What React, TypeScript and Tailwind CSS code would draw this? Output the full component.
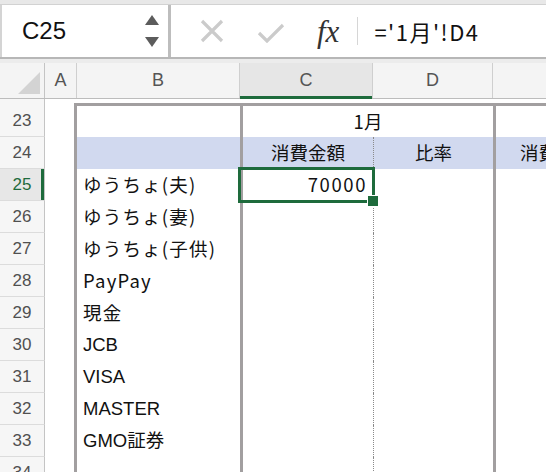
import React from "react";

const GREEN = "#1e6b3c";
const jp = { fontFamily: '"Noto Sans CJK JP", "Noto Sans", sans-serif' };
const lat = { fontFamily: '"Liberation Sans", "Noto Sans CJK JP", sans-serif' };

const LABELS: { text: string; latin?: boolean }[] = [
  { text: "ゆうちょ(夫)" },
  { text: "ゆうちょ(妻)" },
  { text: "ゆうちょ(子供)" },
  { text: "PayPay" },
  { text: "現金" },
  { text: "JCB", latin: true },
  { text: "VISA", latin: true },
  { text: "MASTER", latin: true },
  { text: "GMO証券", latin: true },
  { text: "" },
];

function RowNum({ n, active, top }: { n: number; active?: boolean; top?: boolean }) {
  return (
    <div
      className={`relative w-[45px] shrink-0 flex items-center justify-center border-r border-b border-r-[#c4c4c4] border-b-[#dcdcdc] text-[17px] ${
        active ? "bg-[#e7e7e7] text-[#1e6b3c]" : "bg-[#f6f6f6] text-[#505050]"
      } ${top ? "pt-[7px]" : ""}`}
      style={lat}
    >
      {n}
      {active && <div className="absolute right-0 top-0 bottom-0 w-[3px] bg-[#1e6b3c]" />}
    </div>
  );
}

function FormulaBar() {
  return (
    <>
      <div className="h-[5px] bg-[#e8e8e8] border-b border-[#d2d2d2]" />
      <div className="flex h-[52px] bg-white">
        <div className="w-[168px] shrink-0 flex items-center justify-between pl-[20px] pr-[8px] border-l-2 border-[#d4d4d4]">
          <span className="text-[24px] text-[#111]" style={lat}>
            C25
          </span>
          <svg width="16" height="34" viewBox="0 0 16 34">
            <polygon points="8,1 15,11 1,11" fill="#5c5c5c" />
            <polygon points="1,23 15,23 8,33" fill="#5c5c5c" />
          </svg>
        </div>
        <div className="w-[3px] bg-[#bdbdbd]" />
        <div className="flex items-center">
          <svg width="24" height="24" viewBox="0 0 24 24" className="ml-[29px]">
            <path d="M2 2 L22 22 M22 2 L2 22" stroke="#cbcbcb" strokeWidth="3.2" />
          </svg>
          <svg width="28" height="20" viewBox="0 0 28 20" className="ml-[33px] mt-[4px]">
            <path d="M2 10 L10 18 L26 2" stroke="#cbcbcb" strokeWidth="3.2" fill="none" />
          </svg>
          <span
            className="ml-[32px] text-[31px] italic text-[#333] leading-none"
            style={{ fontFamily: '"Liberation Serif", "DejaVu Serif", serif' }}
          >
            fx
          </span>
          <div className="ml-[18px] w-px h-[28px] bg-[#d6d6d6]" />
          <span className="ml-[16px] text-[22px] tracking-[1.5px] text-[#111]" style={jp}>
            ='1月'!D4
          </span>
        </div>
      </div>
      <div className="h-[2px] bg-[#b7b7b7]" />
      <div className="h-[4px] bg-[#ececec]" />
    </>
  );
}

function HeaderRow() {
  const cell = "shrink-0 flex items-center justify-center border-r border-[#cfcfcf] text-[18px] text-[#555]";
  return (
    <div className="flex h-[36px] bg-[#f4f4f4] border-b border-[#bcbcbc]" style={lat}>
      <div className="relative w-[45px] shrink-0 border-r border-[#c4c4c4]">
        <svg width="22" height="22" viewBox="0 0 22 22" className="absolute right-[4px] bottom-[4px]">
          <polygon points="22,0 22,22 0,22" fill="#d3d3d3" />
        </svg>
      </div>
      <div className={`${cell} w-[32px]`}>A</div>
      <div className={`${cell} w-[163px]`}>B</div>
      <div className={`${cell} w-[133px] relative bg-[#e6e6e6] text-[#1e6b3c]`}>
        C
        <div className="absolute left-0 right-0 bottom-[-1px] h-[3px] bg-[#1e6b3c]" />
      </div>
      <div className={`${cell} w-[120px]`}>D</div>
      <div className="flex-1" />
    </div>
  );
}

export default function App() {
  const border = "border-[#a29fa0]";
  return (
    <div className="w-[546px] h-[472px] overflow-hidden bg-white relative">
      <FormulaBar />
      <HeaderRow />
      <div className="relative">
        {/* row 23 */}
        <div className="flex h-[38px]">
          <RowNum n={23} top />
          <div className="w-[29px] shrink-0" />
          <div className="flex-1 flex pt-[4px]">
            <div className={`flex-1 flex border-t-[3px] ${border}`}>
              <div className={`w-[166px] shrink-0 border-l-[3px] ${border}`} />
              <div
                className={`w-[253px] shrink-0 border-l-[3px] ${border} flex items-center justify-center text-[18.5px] text-[#111]`}
                style={jp}
              >
                1月
              </div>
              <div className={`flex-1 border-l-[3px] ${border}`} />
            </div>
          </div>
        </div>
        {/* row 24 */}
        <div className="flex h-[32px]">
          <RowNum n={24} />
          <div className="w-[29px] shrink-0" />
          <div className="flex-1 flex bg-[#d1d9ef] text-[18.5px] text-[#111]" style={jp}>
            <div className={`w-[166px] shrink-0 border-l-[3px] ${border} bg-white`}>
              <div className="h-full bg-[#d1d9ef]" />
            </div>
            <div className={`w-[133px] shrink-0 border-l-[3px] ${border} flex items-center justify-center`}>
              消費金額
            </div>
            <div className="w-[120px] shrink-0 border-l border-dotted border-[#8a8a8a] flex items-center justify-center">
              比率
            </div>
            <div className={`flex-1 border-l-[3px] ${border} flex items-center pl-[24px] whitespace-nowrap overflow-hidden`}>
              消費金額
            </div>
          </div>
        </div>
        {LABELS.map((l, i) => {
          const n = 25 + i;
          return (
            <div key={n} className="flex h-[32px]">
              <RowNum n={n} active={n === 25} />
              <div className="w-[29px] shrink-0" />
              <div className="flex-1 flex text-[18.5px] text-[#111]">
                <div
                  className={`w-[166px] shrink-0 border-l-[3px] ${border} flex items-center pl-[6px] whitespace-nowrap ${
                    l.latin ? "" : "tracking-[1.2px]"
                  }`}
                  style={l.latin ? lat : jp}
                >
                  {l.text}
                </div>
                <div
                  className={`w-[133px] shrink-0 border-l-[3px] ${border} flex items-center justify-end pr-[6px] tracking-[1.6px]`}
                  style={jp}
                >
                  {n === 25 ? "70000" : ""}
                </div>
                <div className="w-[120px] shrink-0 border-l border-dotted border-[#8a8a8a]" />
                <div className={`flex-1 border-l-[3px] ${border}`} />
              </div>
            </div>
          );
        })}
        {/* selection of C25 */}
        <div
          className="absolute left-[238px] top-[68px] w-[137px] h-[36px] border-[3px]"
          style={{ borderColor: GREEN }}
        />
        <div className="absolute left-[367px] top-[96px] w-[12px] h-[12px] bg-[#1e6b3c] border border-white" />
      </div>
    </div>
  );
}
